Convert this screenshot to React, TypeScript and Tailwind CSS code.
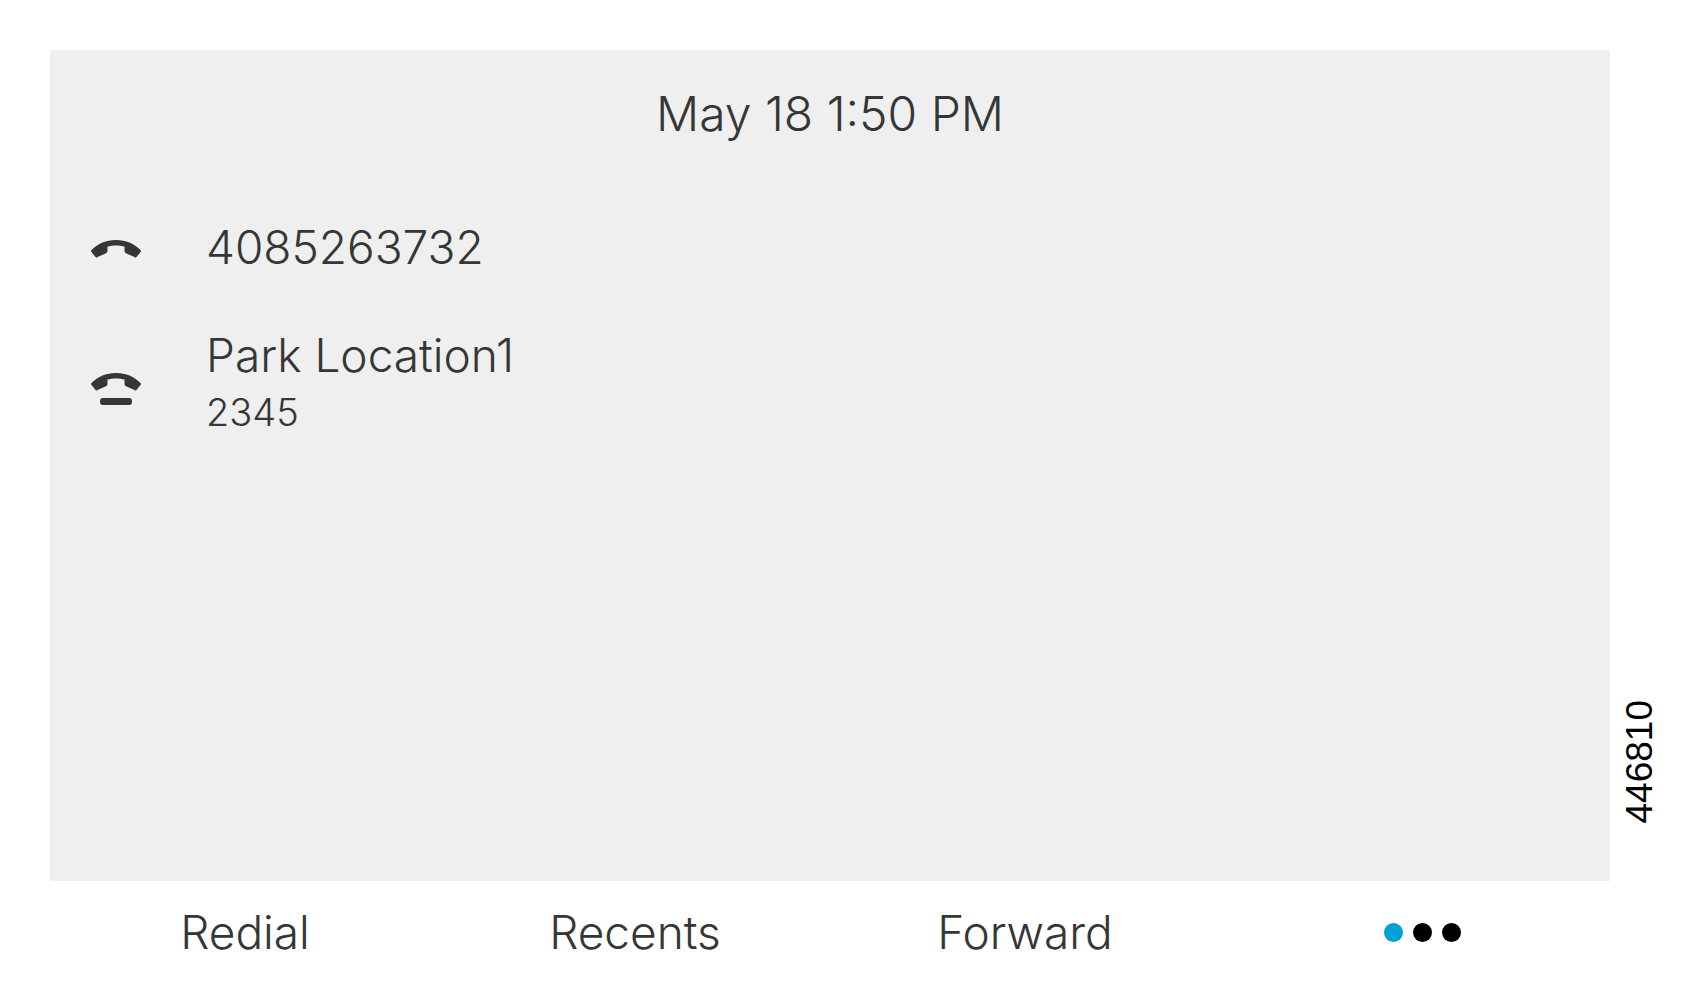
import React from 'react';

const lines = [
  { name: '4085263732', detail: '', parked: false },
  { name: 'Park Location1', detail: '2345', parked: true },
];

const softkeys = ['Redial', 'Recents', 'Forward'];

// Handset icon, with a bar below it for a park line
const HandsetIcon = ({ parked }: { parked: boolean }) => (
  <svg viewBox="0 0 52 64" className="h-16 w-[52px]" fill="#343735" aria-hidden="true">
    <path d="M1.5 35C8 28.500 16 25 26 25s18 3.500 24.500 10Q51.500 36 50.500 37L48.500 39.500 46.500 42Q45.500 43 44.500 42L36.500 38.500Q34.500 37.500 34.500 36V31.500C30 30 22 30 17.500 31.500V36Q17.500 37.500 15.500 38.500L7.500 42Q6.500 43 5.500 42L3.500 39.500 1.500 37Q.5 36 1.500 35z" />
    {parked && <rect x="10" y="50" width="32" height="7" rx="3" />}
  </svg>
);

const App = () => {
  return (
    <div className="flex min-h-screen bg-white pt-[50px] pl-[50px] font-[Inter,sans-serif] font-light text-[#343735]">
      <main className="flex flex-1 flex-col">
        <section className="flex-1 bg-[#efefef] px-10 pt-8">
          <h1 className="text-center text-[48px] leading-[64px]">May 18 1:50 PM</h1>
          <ul className="pt-[69px]">
            {lines.map((line) => (
              <li key={line.name} className="mb-11 flex items-center">
                <HandsetIcon parked={line.parked} />
                <div className="pl-16">
                  <p className="text-[46px] leading-[64px]">{line.name}</p>
                  {line.detail && <p className="text-[38px] leading-[50px]">{line.detail}</p>}
                </div>
              </li>
            ))}
          </ul>
        </section>
        <nav className="grid h-[119px] grid-cols-4 pb-4">
          {softkeys.map((key) => (
            <button key={key} type="button" className="text-[46px]">
              {key}
            </button>
          ))}
          <button type="button" aria-label="More" className="flex items-center justify-center gap-2.5 pl-3.5">
            <span className="size-[19px] rounded-full bg-[#049fd9]" />
            <span className="size-[19px] rounded-full bg-black" />
            <span className="size-[19px] rounded-full bg-black" />
          </button>
        </nav>
      </main>
      <aside className="flex w-[90px] items-end pb-[177px] pl-2">
        <p className="rotate-180 font-['Liberation_Sans',sans-serif] text-[37px] leading-[44px] font-normal text-black [writing-mode:vertical-rl]">
          446810
        </p>
      </aside>
    </div>
  );
};

export default App;
